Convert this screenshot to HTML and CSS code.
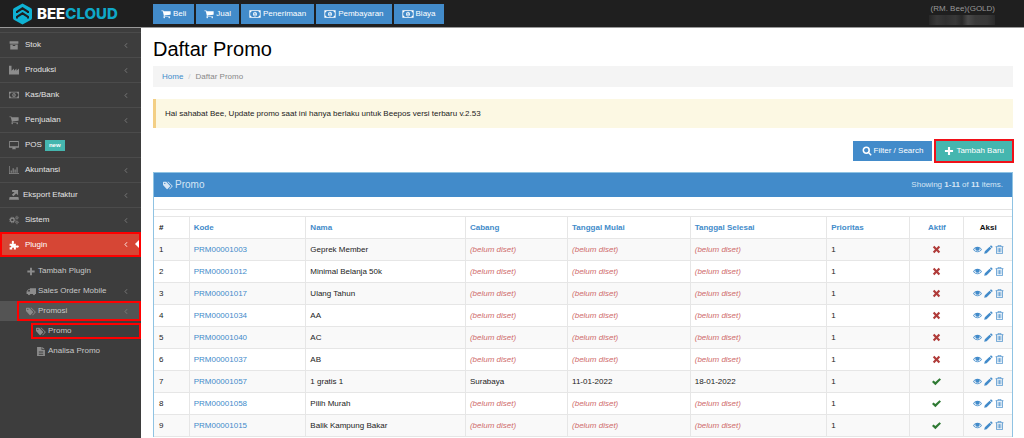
FILE: index.html
```html
<!DOCTYPE html>
<html lang="id">
<head>
<meta charset="utf-8">
<title>Daftar Promo - Beecloud</title>
<link rel="stylesheet" href="styles.css">
</head>
<body>
<svg class="sprite" aria-hidden="true">
  <symbol id="archive" viewBox="0 0 16 16"><path d="M1 2h14v4H1zM2 7h12v8H2zM6 8v1.500h4V8z" fill-rule="evenodd"/></symbol>
  <symbol id="industry" viewBox="0 0 16 16"><path d="M0 15V1h4v8l4-3.500V9l4-3.500V9l4-3.500V15z"/></symbol>
  <symbol id="money" viewBox="0 0 18 16"><path fill-rule="evenodd" d="M0 2h18v12H0zM3.500 3.300a2.300 2.300 0 0 1-2.200 2.300v4.800a2.300 2.300 0 0 1 2.200 2.300h11a2.300 2.300 0 0 1 2.200-2.300V5.600a2.300 2.300 0 0 1-2.200-2.300zM9 4.200c2 0 3 1.800 3 3.800s-1 3.800-3 3.800S6 10 6 8s1-3.800 3-3.800zM8.500 5.600 7.300 6.700l.6.6.5-.4v2.500h-1v1h3.200v-1h-1V5.600z"/></symbol>
  <symbol id="cart" viewBox="0 0 1792 1792"><path d="M704 1536q0 52-38 90t-90 38-90-38-38-90 38-90 90-38 90 38 38 90zm896 0q0 52-38 90t-90 38-90-38-38-90 38-90 90-38 90 38 38 90zm128-1088v512q0 24-16.500 42.500t-40.500 21.500l-1044 122q13 60 13 70 0 16-24 64h920q26 0 45 19t19 45-19 45-45 19h-1024q-26 0-45-19t-19-45q0-11 8-31.500t16-36 21.500-40 15.500-29.500l-177-823h-204q-26 0-45-19t-19-45 19-45 45-19h256q16 0 28.500 6.500t19.500 15.500 13 24.500 8 26 5.500 29.500 4.500 26h1201q26 0 45 19t19 45z"/></symbol>
  <symbol id="desktop" viewBox="0 0 18 16"><path fill-rule="evenodd" d="M1.500 1h15Q18 1 18 2.500v9q0 1.500-1.500 1.500H11.500l.8 2v.6H5.700V15l.8-2h-5Q0 13 0 11.500v-9Q0 1 1.500 1zM1.400 2.400v8h15.200v-8z"/></symbol>
  <symbol id="chart" viewBox="0 0 18 16"><path d="M0 1h1.200v12.800H18V15H0zM3 9h2v4H3zM6.500 5h2v8h-2zM10 7h2v6h-2zM13.500 3h2v10h-2z"/></symbol>
  <symbol id="export" viewBox="0 0 16 16"><path d="M5 0h9.500v8.500l-3-3L7 10 4.600 7.600 9 3.200H5zM1 11h14l1 4.500H0z"/></symbol>
  <symbol id="cogs" viewBox="0 0 18 16"><g fill="none" stroke="currentColor"><circle cx="6" cy="8" r="3.300" stroke-width="2.200"/><circle cx="6" cy="8" r="5" stroke-width="1.600" stroke-dasharray="2 1.930"/><circle cx="14.300" cy="3.800" r="1.700" stroke-width="1.200"/><circle cx="14.300" cy="3.800" r="2.800" stroke-width="1" stroke-dasharray="1.200 1"/><circle cx="14.300" cy="12.200" r="1.700" stroke-width="1.200"/><circle cx="14.300" cy="12.200" r="2.800" stroke-width="1" stroke-dasharray="1.200 1"/></g></symbol>
  <symbol id="puzzle" viewBox="0 0 16 16"><path d="M1 6h4.200C4.200 4.500 3.800 1 6.200 1s2 3.500 1 5H11v3.500c1-.8 4.800-1.200 4.800 1S12 12.600 11 11.500V15H7.600c.8-1.500.4-3-1.100-3s-1.900 1.500-1.100 3H1v-3.500c2 .8 2.600-.2 2.600-1.200S3 8.700 1 9.600z"/></symbol>
  <symbol id="plus" viewBox="0 0 16 16"><path d="M6.300 1.500h3.400v4.800h4.800v3.400H9.700v4.800H6.300V9.700H1.500V6.300h4.800z"/></symbol>
  <symbol id="truck" viewBox="0 0 18 16"><path fill-rule="evenodd" d="M18 2v10.500h-1.500a2.100 2.100 0 0 1-4.200 0H7.500a2.100 2.100 0 0 1-4.200 0H1V8l3-4h3V2zM2.600 8H7V5.400H4.600z"/></symbol>
  <symbol id="tags" viewBox="0 0 20 16"><path fill-rule="evenodd" d="M1 .5h5.500L14 8.300q.8.800 0 1.600l-5 5.300q-.8.700-1.600 0L0 7.200V1.500zM3.600 2.600a1.300 1.300 0 1 0 0 2.600 1.300 1.300 0 0 0 0-2.600z"/><path d="M8.500.5h2.300l8.200 7.800q.8.800 0 1.600l-5 5.300q-.9.800-1.800-.2l4.400-4.700q1.100-1.200 0-2.400z"/></symbol>
  <symbol id="file" viewBox="0 0 14 16"><path fill-rule="evenodd" d="M0 0h8v5.200h6V16H0zM9.200 0 14 4.200H9.200zM3 7v1.200h8V7zm0 2.700v1.200h8V9.700zm0 2.700v1.200h8v-1.200z"/></symbol>
  <symbol id="angle" viewBox="0 0 8 12"><path d="M6 1.500 2 6l4 4.500" fill="none" stroke="currentColor" stroke-width="1.700"/></symbol>
  <symbol id="search" viewBox="0 0 16 16"><circle cx="6.800" cy="6.800" r="4.700" fill="none" stroke="currentColor" stroke-width="2.500"/><path d="m10 11.600 1.600-1.600 3.900 3.900-1.600 1.600z"/></symbol>
  <symbol id="times" viewBox="0 0 16 16"><path d="M4.200 1.500 8 5.200l3.800-3.700 2.700 2.700L10.800 8l3.700 3.800-2.700 2.700L8 10.800l-3.800 3.700-2.700-2.700L5.200 8 1.500 4.200z"/></symbol>
  <symbol id="check" viewBox="0 0 16 16"><path d="M0 8.800 2.700 6l3.300 3 7.300-7L16 4.600 6 14.500z"/></symbol>
  <symbol id="eye" viewBox="0 0 18 16"><path fill-rule="evenodd" d="M9 2.700c4 0 7 2.600 8.800 5.300-1.800 2.700-4.800 5.300-8.800 5.300S2 10.700.2 8C2 5.300 5 2.700 9 2.700zM4.900 4.900Q3 6.200 2 8q2.800 4 7 4t7-4q-1-1.800-2.900-3.100a4.200 4.200 0 1 1-8.200 0z"/><circle cx="9" cy="7" r="3"/></symbol>
  <symbol id="pencil" viewBox="0 0 16 16"><path d="m12.500.3 3.200 3.200-2 2-3.200-3.200zM9.900 2.900l3.200 3.200-8.400 8.400-4.400 1.200 1.200-4.400z"/></symbol>
  <symbol id="trash" viewBox="0 0 14 16"><path d="M4.500 2.500v-2h5v2M0 3h14M1.700 3v12.300h10.600V3M4.600 5.500v7.500M7 5.500v7.500M9.400 5.500v7.500" fill="none" stroke="currentColor" stroke-width="1.300"/></symbol>
</svg>

<header class="topbar">
  <a class="brand" href="#">
    <svg class="brand-mark" viewBox="0 0 20 22" aria-hidden="true"><path d="M10 .500 18.200 5q1.300.7 1.300 2v8q0 1.300-1.300 2L10 21.500 1.800 17Q.5 16.300.5 15V7q0-1.300 1.300-2z" fill="#0fb2d3"/><path d="M4.500 10V8.800L10 5.300l5.500 3.500V10M4.500 15.500v-1.700L10 10.300l5.500 3.500v1.700" fill="none" stroke="#1f1f1f" stroke-width="2"/></svg>
    <span class="brand-name">BEE<span class="brand-accent">CLOUD</span></span>
  </a>
  <nav class="quick">
    <button class="btn" type="button"><svg class="icon"><use href="#cart"/></svg>Beli</button>
    <button class="btn" type="button"><svg class="icon"><use href="#cart"/></svg>Jual</button>
    <button class="btn" type="button"><svg class="icon wide"><use href="#money"/></svg>Penerimaan</button>
    <button class="btn" type="button"><svg class="icon wide"><use href="#money"/></svg>Pembayaran</button>
    <button class="btn" type="button"><svg class="icon wide"><use href="#money"/></svg>Biaya</button>
  </nav>
  <div class="account">
    <span>(RM. Bee)(GOLD)</span>
    <span class="account-mask"></span>
  </div>
</header>

<div class="layout">
  <nav class="sidebar">
    <ul class="menu">
      <li><a class="item" href="#"><svg class="icon"><use href="#archive"/></svg>Stok<svg class="arrow"><use href="#angle"/></svg></a></li>
      <li><a class="item" href="#"><svg class="icon"><use href="#industry"/></svg>Produksi<svg class="arrow"><use href="#angle"/></svg></a></li>
      <li><a class="item" href="#"><svg class="icon"><use href="#money"/></svg>Kas/Bank<svg class="arrow"><use href="#angle"/></svg></a></li>
      <li><a class="item" href="#"><svg class="icon"><use href="#cart"/></svg>Penjualan<svg class="arrow"><use href="#angle"/></svg></a></li>
      <li><a class="item" href="#"><svg class="icon"><use href="#desktop"/></svg>POS<span class="badge">new</span></a></li>
      <li><a class="item" href="#"><svg class="icon"><use href="#chart"/></svg>Akuntansi<svg class="arrow"><use href="#angle"/></svg></a></li>
      <li><a class="item item-tight" href="#"><svg class="icon"><use href="#export"/></svg>Eksport Efaktur<svg class="arrow"><use href="#angle"/></svg></a></li>
      <li><a class="item" href="#"><svg class="icon"><use href="#cogs"/></svg>Sistem<svg class="arrow"><use href="#angle"/></svg></a></li>
      <li>
        <a class="item item-active" href="#"><svg class="icon"><use href="#puzzle"/></svg>Plugin<svg class="arrow"><use href="#angle"/></svg></a>
        <ul class="submenu">
          <li><a class="sub" href="#"><svg class="icon"><use href="#plus"/></svg>Tambah Plugin</a></li>
          <li><a class="sub" href="#"><svg class="icon"><use href="#truck"/></svg>Sales Order Mobile<svg class="arrow"><use href="#angle"/></svg></a></li>
          <li class="open"><a class="sub marked" href="#"><svg class="icon"><use href="#tags"/></svg>Promosi<svg class="arrow"><use href="#angle"/></svg></a></li>
          <li class="deep"><a class="sub marked" href="#"><svg class="icon"><use href="#tags"/></svg>Promo</a></li>
          <li class="deep"><a class="sub" href="#"><svg class="icon"><use href="#file"/></svg>Analisa Promo</a></li>
        </ul>
      </li>
    </ul>
  </nav>

  <main class="content">
    <h1 class="title">Daftar Promo</h1>
    <nav class="crumbs"><a href="#">Home</a><span class="slash">/</span><span>Daftar Promo</span></nav>
    <p class="note">Hai sahabat Bee, Update promo saat ini hanya berlaku untuk Beepos versi terbaru v.2.53</p>
    <div class="actions">
      <button class="btn" type="button"><svg class="icon"><use href="#search"/></svg>Filter / Search</button>
      <button class="btn btn-add" type="button"><svg class="icon"><use href="#plus"/></svg>Tambah Baru</button>
    </div>
    <section class="panel">
      <div class="panel-head">
        <h2 class="panel-title"><svg class="icon"><use href="#tags"/></svg>Promo</h2>
        <span class="summary">Showing <b>1-11</b> of <b>11</b> items.</span>
      </div>
      <div class="panel-strip"></div>
      <table class="grid">
        <colgroup><col class="c-no"><col class="c-code"><col class="c-name"><col class="c-branch"><col class="c-start"><col class="c-end"><col class="c-prio"><col class="c-on"><col class="c-act"></colgroup>
        <thead>
          <tr><th>#</th><th><a href="#">Kode</a></th><th><a href="#">Nama</a></th><th><a href="#">Cabang</a></th><th><a href="#">Tanggal Mulai</a></th><th><a href="#">Tanggal Selesai</a></th><th><a href="#">Prioritas</a></th><th class="mid"><a href="#">Aktif</a></th><th class="mid">Aksi</th></tr>
        </thead>
        <tbody>
          <tr><td>1</td><td><a href="#">PRM00001003</a></td><td>Geprek Member</td><td><i>(belum diset)</i></td><td><i>(belum diset)</i></td><td><i>(belum diset)</i></td><td>1</td><td class="mid"><svg class="icon no"><use href="#times"/></svg></td><td class="tools"><a href="#" aria-label="Lihat"><svg class="icon"><use href="#eye"/></svg></a><a href="#" aria-label="Ubah"><svg class="icon"><use href="#pencil"/></svg></a><a href="#" aria-label="Hapus"><svg class="icon"><use href="#trash"/></svg></a></td></tr>
          <tr><td>2</td><td><a href="#">PRM00001012</a></td><td>Minimal Belanja 50k</td><td><i>(belum diset)</i></td><td><i>(belum diset)</i></td><td><i>(belum diset)</i></td><td>1</td><td class="mid"><svg class="icon no"><use href="#times"/></svg></td><td class="tools"><a href="#" aria-label="Lihat"><svg class="icon"><use href="#eye"/></svg></a><a href="#" aria-label="Ubah"><svg class="icon"><use href="#pencil"/></svg></a><a href="#" aria-label="Hapus"><svg class="icon"><use href="#trash"/></svg></a></td></tr>
          <tr><td>3</td><td><a href="#">PRM00001017</a></td><td>Ulang Tahun</td><td><i>(belum diset)</i></td><td><i>(belum diset)</i></td><td><i>(belum diset)</i></td><td>1</td><td class="mid"><svg class="icon no"><use href="#times"/></svg></td><td class="tools"><a href="#" aria-label="Lihat"><svg class="icon"><use href="#eye"/></svg></a><a href="#" aria-label="Ubah"><svg class="icon"><use href="#pencil"/></svg></a><a href="#" aria-label="Hapus"><svg class="icon"><use href="#trash"/></svg></a></td></tr>
          <tr><td>4</td><td><a href="#">PRM00001034</a></td><td>AA</td><td><i>(belum diset)</i></td><td><i>(belum diset)</i></td><td><i>(belum diset)</i></td><td>1</td><td class="mid"><svg class="icon no"><use href="#times"/></svg></td><td class="tools"><a href="#" aria-label="Lihat"><svg class="icon"><use href="#eye"/></svg></a><a href="#" aria-label="Ubah"><svg class="icon"><use href="#pencil"/></svg></a><a href="#" aria-label="Hapus"><svg class="icon"><use href="#trash"/></svg></a></td></tr>
          <tr><td>5</td><td><a href="#">PRM00001040</a></td><td>AC</td><td><i>(belum diset)</i></td><td><i>(belum diset)</i></td><td><i>(belum diset)</i></td><td>1</td><td class="mid"><svg class="icon no"><use href="#times"/></svg></td><td class="tools"><a href="#" aria-label="Lihat"><svg class="icon"><use href="#eye"/></svg></a><a href="#" aria-label="Ubah"><svg class="icon"><use href="#pencil"/></svg></a><a href="#" aria-label="Hapus"><svg class="icon"><use href="#trash"/></svg></a></td></tr>
          <tr><td>6</td><td><a href="#">PRM00001037</a></td><td>AB</td><td><i>(belum diset)</i></td><td><i>(belum diset)</i></td><td><i>(belum diset)</i></td><td>1</td><td class="mid"><svg class="icon no"><use href="#times"/></svg></td><td class="tools"><a href="#" aria-label="Lihat"><svg class="icon"><use href="#eye"/></svg></a><a href="#" aria-label="Ubah"><svg class="icon"><use href="#pencil"/></svg></a><a href="#" aria-label="Hapus"><svg class="icon"><use href="#trash"/></svg></a></td></tr>
          <tr><td>7</td><td><a href="#">PRM00001057</a></td><td>1 gratis 1</td><td>Surabaya</td><td>11-01-2022</td><td>18-01-2022</td><td>1</td><td class="mid"><svg class="icon yes"><use href="#check"/></svg></td><td class="tools"><a href="#" aria-label="Lihat"><svg class="icon"><use href="#eye"/></svg></a><a href="#" aria-label="Ubah"><svg class="icon"><use href="#pencil"/></svg></a><a href="#" aria-label="Hapus"><svg class="icon"><use href="#trash"/></svg></a></td></tr>
          <tr><td>8</td><td><a href="#">PRM00001058</a></td><td>Pilih Murah</td><td><i>(belum diset)</i></td><td><i>(belum diset)</i></td><td><i>(belum diset)</i></td><td>1</td><td class="mid"><svg class="icon yes"><use href="#check"/></svg></td><td class="tools"><a href="#" aria-label="Lihat"><svg class="icon"><use href="#eye"/></svg></a><a href="#" aria-label="Ubah"><svg class="icon"><use href="#pencil"/></svg></a><a href="#" aria-label="Hapus"><svg class="icon"><use href="#trash"/></svg></a></td></tr>
          <tr><td>9</td><td><a href="#">PRM00001015</a></td><td>Balik Kampung Bakar</td><td><i>(belum diset)</i></td><td><i>(belum diset)</i></td><td><i>(belum diset)</i></td><td>1</td><td class="mid"><svg class="icon yes"><use href="#check"/></svg></td><td class="tools"><a href="#" aria-label="Lihat"><svg class="icon"><use href="#eye"/></svg></a><a href="#" aria-label="Ubah"><svg class="icon"><use href="#pencil"/></svg></a><a href="#" aria-label="Hapus"><svg class="icon"><use href="#trash"/></svg></a></td></tr>
        </tbody>
      </table>
    </section>
  </main>
</div>
</body>
</html>
```

FILE: styles.css
```css
* { box-sizing: border-box; }

body {
  margin: 0;
  min-height: 100vh;
  display: flex;
  flex-direction: column;
  background: #fff;
  color: #222;
  font-family: "Liberation Sans", Arial, sans-serif;
  font-size: 8px;
  line-height: 12px;
}

a { color: #428bca; text-decoration: none; }
ul { list-style: none; margin: 0; padding: 0; }

.sprite { position: absolute; width: 0; height: 0; }
.icon { width: 9px; height: 9px; fill: currentColor; flex: none; }
.arrow { width: 4px; height: 7px; margin-left: auto; color: #808080; }

.topbar {
  display: flex;
  align-items: center;
  height: 28px;
  padding-right: 29px;
  background: #1f1f1f;
  border-bottom: 1px solid #999;
}
.brand {
  display: flex;
  align-items: center;
  gap: 4px;
  width: 153px;
  padding-left: 12px;
}
.brand-mark { width: 21px; height: 22px; }
.brand-name {
  color: #fff;
  font: 800 15px/22px Inter, sans-serif;
}
.brand-accent { color: #0fa8c8; }
.quick { display: flex; gap: 2px; }

.btn {
  display: flex;
  align-items: center;
  gap: 2px;
  height: 20px;
  padding: 0 9px;
  border: 0;
  background: #428bca;
  color: #fff;
  font: 8px/12px "Liberation Sans", Arial, sans-serif;
}
.quick .btn { padding: 0 8px; }
.btn .icon { width: 10px; height: 10px; }
.btn .wide { width: 12px; }
.btn-add { padding: 0 8px; background: #45b6af; outline: 2px solid #f01018; }

.account {
  display: flex;
  flex-direction: column;
  align-items: flex-end;
  margin-left: auto;
  color: #999;
}
.account-mask {
  width: 66px;
  height: 10px;
  background: linear-gradient(90deg, #272727, #383838 12%, #303030 25%, #383838 40%, #292929 50%, #4a4a4a 59%, #3a3a3a 70%, #383838 88%, #2a2a2a);
}

.layout { display: flex; flex: 1; }

.sidebar {
  width: 141px;
  flex: none;
  padding-top: 4px;
  background: #3d3d3d;
}
.item {
  display: flex;
  align-items: center;
  gap: 6px;
  height: 25px;
  padding: 0 13px 0 9px;
  border-top: 1px solid #4b4b4b;
  color: #e4e4e4;
}
.item .icon { width: 10px; height: 10px; color: #8c8c8c; }
.item-tight { gap: 4px; }
.badge {
  margin-left: -3px;
  padding: 0 4px;
  background: #45b6af;
  color: #fff;
  font-size: 6px;
  font-weight: bold;
  line-height: 11px;
}
.item-active {
  position: relative;
  border: 2px solid #fe0000;
  padding: 0 11px 0 7px;
  background: #d64635;
  color: #fff;
}
.item-active .icon, .item-active .arrow { color: #fff; }
.item-active::after {
  content: "";
  position: absolute;
  right: 0;
  top: 6px;
  border: solid transparent;
  border-width: 4px 4px 4px 0;
  border-right-color: #fff;
}

.submenu { padding-top: 4px; }
.submenu li { display: flex; height: 20px; padding-left: 17px; align-items: center; }
.submenu .deep { padding-left: 31px; }
.submenu .open { background: #545454; }
.sub {
  display: flex;
  flex: 1;
  align-items: center;
  gap: 2px;
  height: 16px;
  padding: 0 13px 0 9px;
  color: #c8c8c8;
}
.sub .icon { width: 10px; height: 9px; color: #8c8c8c; }
.deep .sub { padding-left: 5px; }
.marked { outline: 2px solid #f00; outline-offset: -2px; }
.open .sub { height: 20px; }

.content { flex: 1; min-width: 0; padding: 9px 11px 0 12px; }
.title {
  margin: 0;
  color: #000;
  font-size: 20px;
  font-weight: normal;
  line-height: 24px;
}
.crumbs {
  display: flex;
  gap: 5px;
  margin-top: 5px;
  padding: 5px 9px 4px;
  background: #f4f4f4;
  color: #888;
}
.slash { color: #ccc; }
.note {
  margin: 12px 0 0;
  padding: 9px 9px 8px;
  border-left: 3px solid #f3cf85;
  background: #fcf8e3;
}
.actions {
  display: flex;
  justify-content: flex-end;
  gap: 4px;
  margin: 13px 1px 11px 0;
}

.panel { border: 1px solid #8fc3e3; border-bottom: 0; }
.panel-head {
  display: flex;
  justify-content: space-between;
  align-items: center;
  height: 24px;
  padding: 0 9px;
  background: #428bca;
  color: #d6e6f5;
}
.panel-title {
  display: flex;
  align-items: center;
  gap: 2px;
  margin: 0;
  font-size: 10px;
  font-weight: normal;
}
.panel-title .icon { width: 10px; }
.panel-strip { height: 13px; margin-bottom: 6px; border-bottom: 1px solid #e2e2e2; }

.grid { width: 100%; table-layout: fixed; border-collapse: collapse; }
.grid th, .grid td {
  height: 22px;
  padding: 0 4px;
  border: 1px solid #e6e6e6;
  text-align: left;
}
.grid tr > :first-child { padding-left: 5px; border-left: 0; }
.grid tr > :last-child { border-right: 0; }
.grid th { color: #111; }
.grid i { color: #cf6b6b; }
.grid tbody tr:nth-child(odd) { background: #f9f9f9; }
.grid .mid { text-align: center; }
.grid .icon { vertical-align: middle; }
.grid .tools { padding: 0; text-align: center; }
.tools a + a { margin-left: 2px; }
.no { color: #b03c3a; }
.yes { color: #2f7a34; }

.c-no { width: 4.1%; }
.c-code { width: 13.6%; }
.c-name { width: 18.6%; }
.c-branch { width: 11.9%; }
.c-start { width: 14.3%; }
.c-end { width: 15.9%; }
.c-prio { width: 9.7%; }
.c-on { width: 6.3%; }
.c-act { width: 5.6%; }
```
